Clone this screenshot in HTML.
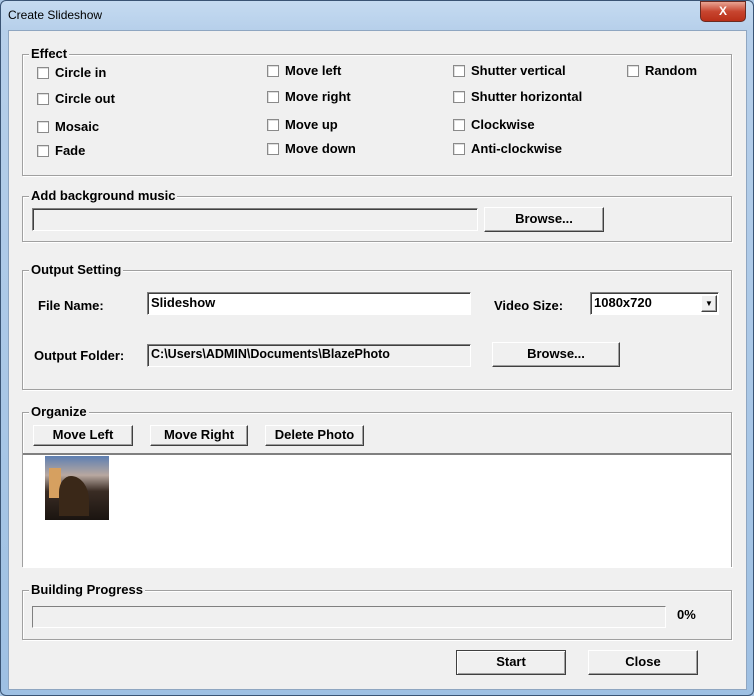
<!DOCTYPE html><html><head><style>
body{margin:0;width:754px;height:696px;overflow:hidden;background:#a9c6e4;font-family:"Liberation Sans",sans-serif;}
.win{position:absolute;left:0;top:0;width:752px;height:694px;border:1px solid #3a5474;border-radius:6px;background:linear-gradient(180deg,#c5dbf1 0,#b6cfea 30px,#9ec0e3 100%);}
.title{position:absolute;left:8px;top:8px;font-size:12px;color:#000;}
.xbtn{position:absolute;left:700px;top:1px;width:44px;height:19px;border:1px solid #6b2b22;border-radius:0 0 5px 5px;background:linear-gradient(#e8a493,#c7452f 50%,#b92f18);color:#fff;font-weight:bold;font-size:12px;text-align:center;line-height:18px;}
.client{position:absolute;left:8px;top:30px;width:737px;height:658px;background:#f0f0f0;border:1px solid #8fa6c1;}
.a{position:absolute;font-size:13px;font-weight:bold;color:#000;white-space:nowrap;}
.grp{position:absolute;border:1px solid #a0a0a0;box-shadow:1px 1px 0 #fff inset,1px 1px 0 #fff;}
.gt{position:absolute;top:-9px;left:7px;background:#f0f0f0;padding:0 2px;font-size:13px;font-weight:bold;}
.cb{position:absolute;width:10px;height:10px;border:1px solid #8a8a8a;background:#fff;box-shadow:inset 1px 1px 0 #ddd;}
.btn{position:absolute;background:#f0f0f0;border:1px solid;border-color:#fff #404040 #404040 #fff;box-shadow:inset -1px -1px 0 #a0a0a0;font-size:13px;font-weight:bold;text-align:center;box-sizing:border-box;}
.edit{position:absolute;background:#fff;border:1px solid;border-color:#808080 #fff #fff #808080;box-shadow:inset 1px 1px 0 #404040;box-sizing:border-box;font-size:13px;font-weight:bold;padding:2px 3px;}
</style></head><body>
<div class="win"></div>
<div class="title">Create Slideshow</div>
<div class="xbtn">X</div>
<div class="client"></div>

<div class="grp" style="left:22px;top:54px;width:708px;height:120px"><span class="gt" style="left:6px">Effect</span></div>
<div class="cb" style="left:37px;top:67px"></div><div class="a" style="left:55px;top:65px">Circle in</div>
<div class="cb" style="left:37px;top:93px"></div><div class="a" style="left:55px;top:91px">Circle out</div>
<div class="cb" style="left:37px;top:121px"></div><div class="a" style="left:55px;top:119px">Mosaic</div>
<div class="cb" style="left:37px;top:145px"></div><div class="a" style="left:55px;top:143px">Fade</div>
<div class="cb" style="left:267px;top:65px"></div><div class="a" style="left:285px;top:63px">Move left</div>
<div class="cb" style="left:267px;top:91px"></div><div class="a" style="left:285px;top:89px">Move right</div>
<div class="cb" style="left:267px;top:119px"></div><div class="a" style="left:285px;top:117px">Move up</div>
<div class="cb" style="left:267px;top:143px"></div><div class="a" style="left:285px;top:141px">Move down</div>
<div class="cb" style="left:453px;top:65px"></div><div class="a" style="left:471px;top:63px">Shutter vertical</div>
<div class="cb" style="left:453px;top:91px"></div><div class="a" style="left:471px;top:89px">Shutter horizontal</div>
<div class="cb" style="left:453px;top:119px"></div><div class="a" style="left:471px;top:117px">Clockwise</div>
<div class="cb" style="left:453px;top:143px"></div><div class="a" style="left:471px;top:141px">Anti-clockwise</div>
<div class="cb" style="left:627px;top:65px"></div><div class="a" style="left:645px;top:63px">Random</div>

<div class="grp" style="left:22px;top:196px;width:708px;height:44px"><span class="gt" style="left:6px">Add background music</span></div>
<div class="edit" style="left:32px;top:208px;width:446px;height:23px;background:#f0f0f0"></div>
<div class="btn" style="left:484px;top:207px;width:120px;height:25px;line-height:22px">Browse...</div>

<div class="grp" style="left:22px;top:270px;width:708px;height:118px"><span class="gt" style="left:6px">Output Setting</span></div>
<div class="a" style="left:38px;top:298px">File Name:</div>
<div class="edit" style="left:147px;top:292px;width:324px;height:23px">Slideshow</div>
<div class="a" style="left:494px;top:298px">Video Size:</div>
<div class="edit" style="left:590px;top:292px;width:129px;height:23px">1080x720</div>
<div class="btn" style="left:701px;top:295px;width:16px;height:17px;font-size:8px;line-height:15px">▼</div>
<div class="a" style="left:34px;top:348px">Output Folder:</div>
<div class="edit" style="left:147px;top:344px;width:324px;height:23px;background:#f0f0f0;font-size:12.5px">C:\Users\ADMIN\Documents\BlazePhoto</div>
<div class="btn" style="left:492px;top:342px;width:128px;height:25px;line-height:22px">Browse...</div>

<div class="grp" style="left:22px;top:412px;width:708px;height:153px"><span class="gt" style="left:6px">Organize</span></div>
<div class="btn" style="left:33px;top:425px;width:100px;height:21px;line-height:18px">Move Left</div>
<div class="btn" style="left:150px;top:425px;width:98px;height:21px;line-height:18px">Move Right</div>
<div class="btn" style="left:265px;top:425px;width:99px;height:21px;line-height:18px">Delete Photo</div>
<div style="position:absolute;left:23px;top:453px;width:708px;height:112px;background:#fff;border-top:2px solid #808080"></div>
<div style="position:absolute;left:45px;top:456px;width:64px;height:64px;background:linear-gradient(180deg,#5d7fb2 0,#b8a8a0 30%,#3a2c24 55%,#1a1410 100%)">
<div style="position:absolute;left:4px;top:12px;width:12px;height:30px;background:#d6a060"></div>
<div style="position:absolute;left:14px;top:20px;width:30px;height:40px;background:#3a2818;border-radius:40% 60% 0 0"></div></div>

<div class="grp" style="left:22px;top:590px;width:708px;height:48px"><span class="gt" style="left:6px">Building Progress</span></div>
<div class="edit" style="left:32px;top:606px;width:634px;height:22px;background:#f0f0f0;box-shadow:none"></div>
<div class="a" style="left:677px;top:607px">0%</div>

<div class="btn" style="left:456px;top:650px;width:110px;height:25px;line-height:22px;border-color:#404040;box-shadow:inset 1px 1px 0 #fff,inset -1px -1px 0 #a0a0a0">Start</div>
<div class="btn" style="left:588px;top:650px;width:110px;height:25px;line-height:22px">Close</div>
</body></html>
